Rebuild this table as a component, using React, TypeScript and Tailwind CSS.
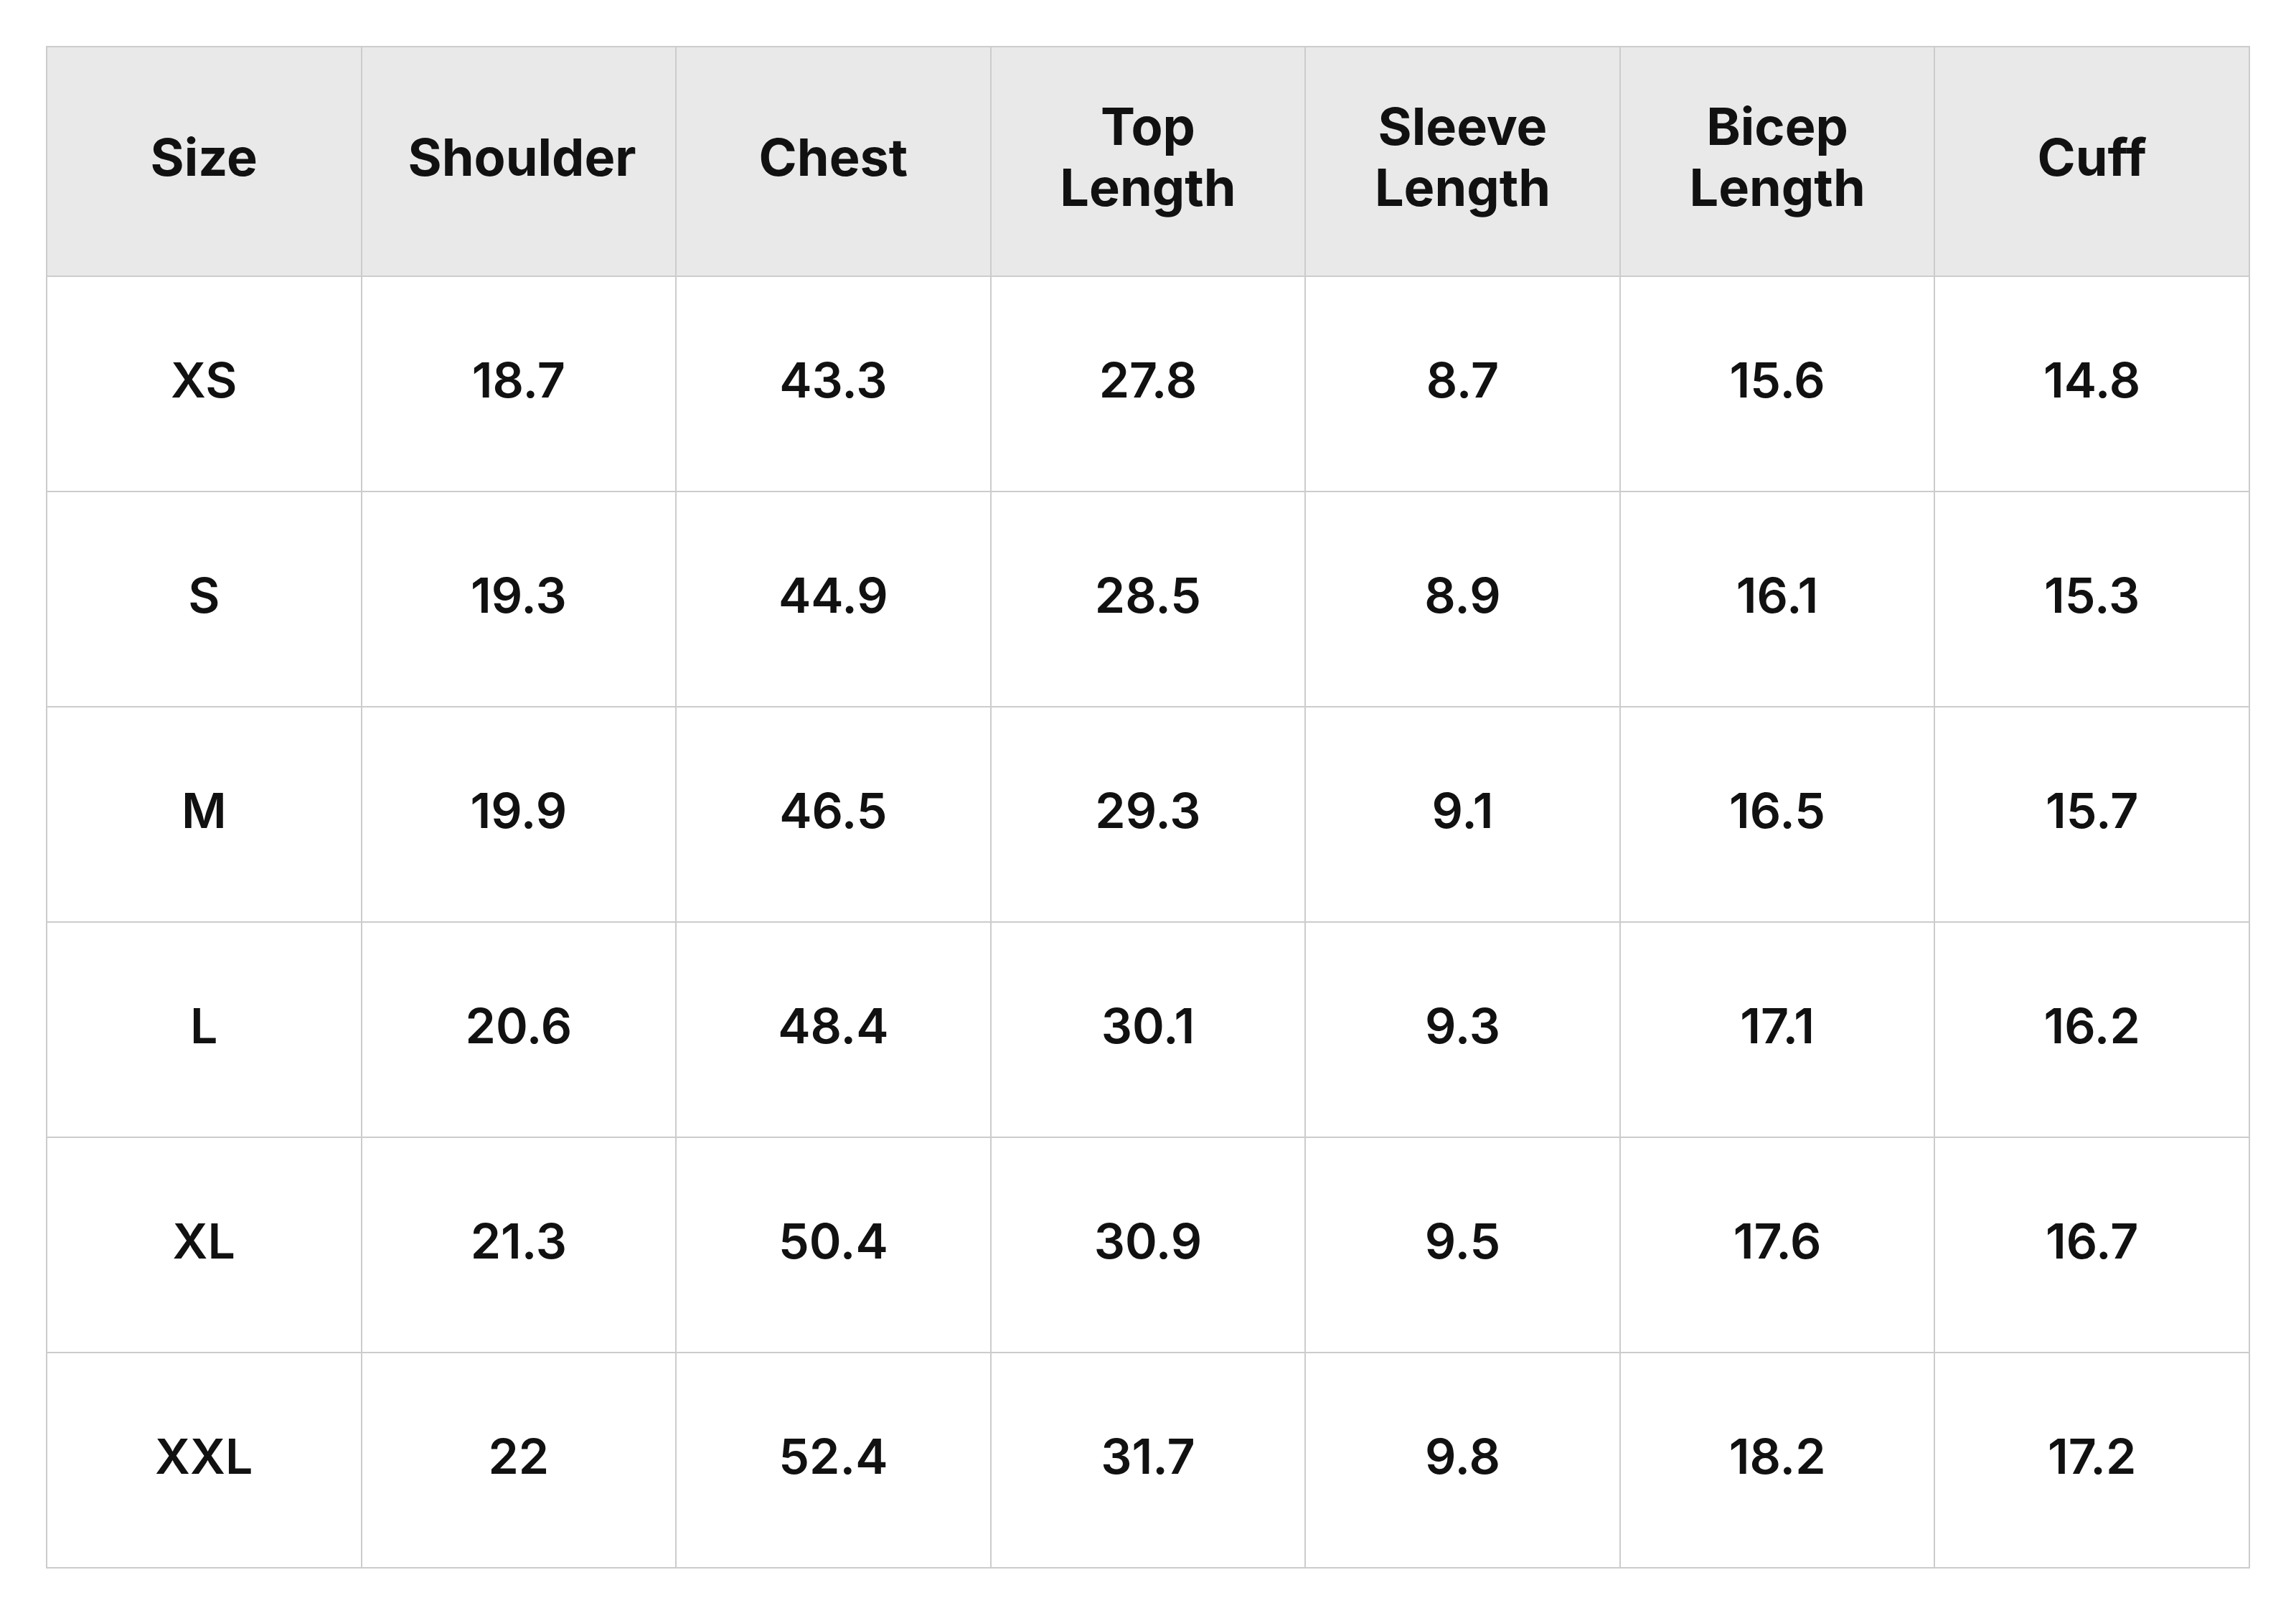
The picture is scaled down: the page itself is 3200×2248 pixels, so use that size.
const headers = ["Size", "Shoulder", "Chest", "Top Length", "Sleeve Length", "Bicep Length", "Cuff"];

const rows = [
  ["XS", "18.7", "43.3", "27.8", "8.7", "15.6", "14.8"],
  ["S", "19.3", "44.9", "28.5", "8.9", "16.1", "15.3"],
  ["M", "19.9", "46.5", "29.3", "9.1", "16.5", "15.7"],
  ["L", "20.6", "48.4", "30.1", "9.3", "17.1", "16.2"],
  ["XL", "21.3", "50.4", "30.9", "9.5", "17.6", "16.7"],
  ["XXL", "22", "52.4", "31.7", "9.8", "18.2", "17.2"],
];

export default function App() {
  return (
    <div className="min-h-screen bg-white p-16 text-[#111111] font-['Inter','Liberation_Sans',sans-serif]">
      <table className="w-full table-fixed border-collapse border-2 border-[#cccccc]">
        <thead>
          <tr className="h-[320px] bg-[#e9e9e9]">
            {headers.map((h) => (
              <th
                key={h}
                className="border-2 border-[#cccccc] px-16 pb-[14px] text-center align-middle text-[72px] font-bold leading-[85px]"
              >
                {h}
              </th>
            ))}
          </tr>
        </thead>
        <tbody>
          {rows.map((row) => (
            <tr key={row[0]} className="h-[300px]">
              {row.map((cell, i) => (
                <td
                  key={i}
                  className="border-2 border-[#cccccc] pb-[12px] text-center align-middle text-[68px] font-semibold"
                >
                  {cell}
                </td>
              ))}
            </tr>
          ))}
        </tbody>
      </table>
    </div>
  );
}
